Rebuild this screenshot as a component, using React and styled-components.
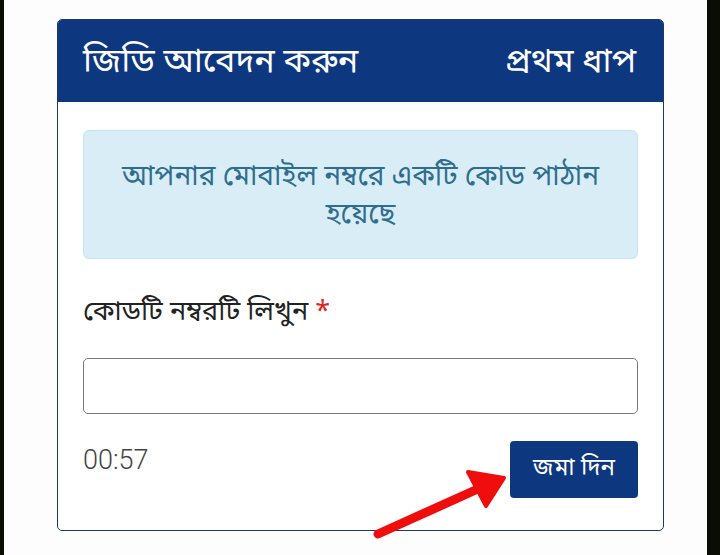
import styled, { createGlobalStyle } from "styled-components";

const GlobalStyle = createGlobalStyle`
  html, body {
    margin: 0;
    padding: 0;
    background: #0a0e02;
  }
  body {
    font-family: "Noto Sans Bengali", "Noto Sans", "Liberation Sans", sans-serif;
  }
`;

const Page = styled.div`
  position: relative;
  margin: 0 13px 0 4px;
  min-height: 555px;
  background: #fdfdfd;
  padding: 19px 43px 0 53px;
  box-sizing: border-box;
`;

const Card = styled.div`
  border: 1px solid #1d3a66;
  border-radius: 5px;
  overflow: hidden;
  background: #fff;
`;

const Header = styled.div`
  display: flex;
  justify-content: space-between;
  align-items: center;
  height: 82px;
  padding: 4px 27px 0 25px;
  background: #0d3880;
  color: #fff;
  font-size: 34px;
  font-weight: 400;
  box-sizing: border-box;
`;

const Body = styled.div`
  padding: 28px 25px 32px 25px;
`;

const Alert = styled.div`
  height: 129px;
  box-sizing: border-box;
  display: flex;
  align-items: center;
  justify-content: center;
  text-align: center;
  padding: 4px 20px 0;
  background: #d9edf7;
  border: 1px solid #c4e3ef;
  border-radius: 6px;
  color: #2f6d8e;
  font-size: 28px;
  line-height: 38px;
`;

const Label = styled.div`
  margin-top: 36px;
  font-size: 27px;
  color: #222;
  line-height: 36px;
`;

const Star = styled.span`
  color: #d9261c;
`;

const Input = styled.input`
  display: block;
  width: 100%;
  box-sizing: border-box;
  height: 56px;
  margin-top: 27px;
  border: 1px solid #7a7a7a;
  border-radius: 5px;
  background: #fff;
  font-size: 20px;
`;

const Footer = styled.div`
  display: flex;
  justify-content: space-between;
  align-items: flex-start;
  margin-top: 27px;
`;

const Timer = styled.div`
  font-family: Roboto, "Liberation Sans", sans-serif;
  font-weight: 300;
  font-size: 27px;
  color: #444;
  padding-top: 3px;
`;

const Button = styled.button`
  width: 128px;
  height: 57px;
  border: none;
  border-radius: 4px;
  background: #0d3880;
  color: #fff;
  font-family: inherit;
  font-size: 24px;
  padding: 0 0 2px;
`;

const Arrow = styled.svg`
  position: absolute;
  left: 366px;
  top: 468px;
  pointer-events: none;
`;

export default function App() {
  return (
    <>
      <GlobalStyle />
      <Page>
        <Card>
          <Header>
            <span>জিডি আবেদন করুন</span>
            <span>প্রথম ধাপ</span>
          </Header>
          <Body>
            <Alert>আপনার মোবাইল নম্বরে একটি কোড পাঠান হয়েছে</Alert>
            <Label>
              কোডটি নম্বরটি লিখুন <Star>*</Star>
            </Label>
            <Input type="text" />
            <Footer>
              <Timer>00:57</Timer>
              <Button>জমা দিন</Button>
            </Footer>
          </Body>
        </Card>
        <Arrow width="140" height="80" viewBox="0 0 140 80">
          <line x1="8" y1="66" x2="110" y2="20" stroke="#f00d0d" strokeWidth="9" strokeLinecap="round" />
          <polygon points="134,10 98,4 116,38" fill="#f00d0d" stroke="#f00d0d" strokeWidth="4" strokeLinejoin="round" />
        </Arrow>
      </Page>
    </>
  );
}
